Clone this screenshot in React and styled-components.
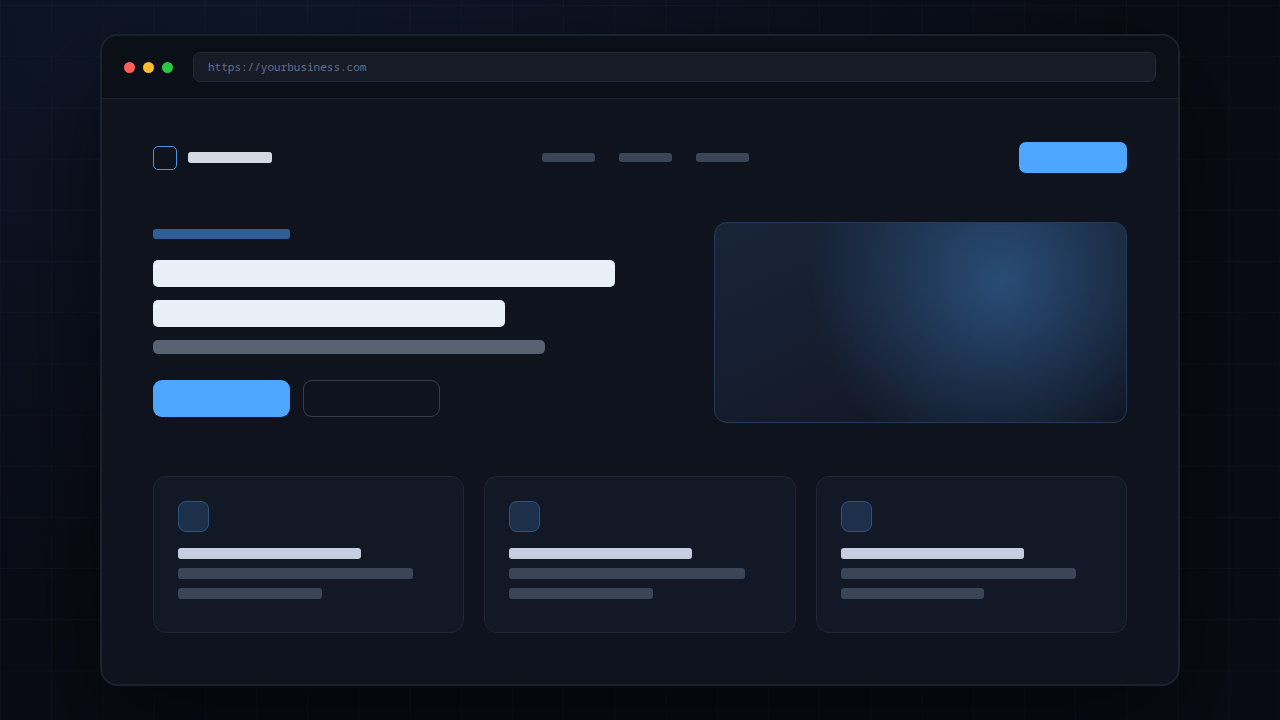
import styled, { createGlobalStyle } from "styled-components";

const features = [
  { id: 1, name: "Feature one" },
  { id: 2, name: "Feature two" },
  { id: 3, name: "Feature three" },
];

const App = () => {
  return (
    <>
      <GlobalStyle />
      <Backdrop>
        <BrowserWindow>
          <Toolbar>
            <Dots>
              <Dot $color="#ff5f57" />
              <Dot $color="#febc2e" />
              <Dot $color="#28c840" />
            </Dots>
            <AddressBar
              type="text"
              aria-label="Address"
              defaultValue="https://yourbusiness.com"
            />
          </Toolbar>
          <Page>
            <Nav>
              <Brand>
                <BrandMark />
                <Bar $width="84px" $height={11} $color="#d5d9e2" />
              </Brand>
              <NavLinks>
                <NavLink href="#features" aria-label="Features" />
                <NavLink href="#pricing" aria-label="Pricing" />
                <NavLink href="#contact" aria-label="Contact" />
              </NavLinks>
              <NavButton type="button" aria-label="Sign up" />
            </Nav>
            <Hero>
              <HeroText>
                <Bar $width="137px" $height={10} $color="#2f5e96" />
                <Headline>
                  <Bar $width="462px" $height={27} $radius={5} $color="#e8eff7" />
                  <Bar $width="352px" $height={27} $radius={5} $color="#e8eff7" />
                  <Bar $width="392px" $height={14} $radius={5} $color="#596273" />
                </Headline>
                <Actions>
                  <ActionButton type="button" aria-label="Start" $primary />
                  <ActionButton type="button" aria-label="Learn more" />
                </Actions>
              </HeroText>
              <HeroVisual />
            </Hero>
            <Features>
              {features.map((el) => {
                return (
                  <FeatureCard key={el.id} aria-label={el.name}>
                    <FeatureIcon />
                    <Bar $width="70%" $height={11} $color="#c5cee0" />
                    <Bar $width="90%" $height={11} $color="#3b4558" />
                    <Bar $width="55%" $height={11} $color="#3b4558" />
                  </FeatureCard>
                );
              })}
            </Features>
          </Page>
        </BrowserWindow>
      </Backdrop>
    </>
  );
};

export default App;

const GlobalStyle = createGlobalStyle`
  * {
    box-sizing: border-box;
  }

  body {
    margin: 0;
    background-color: #070a12;
  }
`;

const Backdrop = styled.main`
  min-height: 100vh;
  padding: 34px 24px;
  display: flex;
  justify-content: center;
  align-items: center;
  background-image:
    linear-gradient(rgba(120, 150, 200, 0.04) 1px, transparent 1px),
    linear-gradient(90deg, rgba(120, 150, 200, 0.04) 1px, transparent 1px),
    radial-gradient(ellipse at 20% 0%, rgba(77, 140, 255, 0.09), transparent 60%),
    linear-gradient(#090c15, #090c15);
  background-size: 4vw 4vw, 4vw 4vw, auto, auto;
  background-position: 0 5px, 0 0, 0 0, 0 0;
`;

const BrowserWindow = styled.section`
  width: 100%;
  max-width: 1080px;
  border: 2px solid #1c222c;
  border-radius: 18px;
  background-color: #0f131d;
  box-shadow: 0 36px 110px rgba(0, 0, 0, 0.55);
  overflow: hidden;
`;

const Toolbar = styled.header`
  display: flex;
  align-items: center;
  gap: 20px;
  padding: 16px 22px;
  background-color: #0b0f17;
  border-bottom: 1px solid #1b2029;
`;

const Dots = styled.div`
  display: flex;
  gap: 8px;
`;

const Dot = styled.span`
  width: 11px;
  height: 11px;
  border-radius: 50%;
  background-color: ${({ $color }) => $color};
`;

const AddressBar = styled.input`
  flex: 1;
  min-width: 0;
  height: 30px;
  padding: 0 14px 2px;
  border: 1px solid #242933;
  border-radius: 7px;
  outline: none;
  background-color: #171b27;
  color: #64708a;
  font-family: "Noto Sans Mono", "Liberation Mono", monospace;
  font-size: 11px;
`;

const Page = styled.div`
  padding: 43px 51px 51px;
`;

const Nav = styled.nav`
  display: flex;
  justify-content: space-between;
  align-items: center;
  margin-bottom: 49px;
`;

const Brand = styled.div`
  display: flex;
  align-items: center;
  gap: 11px;
`;

const BrandMark = styled.span`
  width: 24px;
  height: 24px;
  border: 1px solid #4a94e0;
  border-radius: 5px;
`;

const Bar = styled.div`
  width: ${({ $width }) => $width};
  max-width: 100%;
  height: ${({ $height }) => $height}px;
  border-radius: ${({ $radius = 3 }) => $radius}px;
  background-color: ${({ $color }) => $color};
`;

const NavLinks = styled.div`
  display: flex;
  gap: 24px;
`;

const NavLink = styled.a`
  width: 53px;
  height: 9px;
  border-radius: 3px;
  background-color: #3b4558;
`;

const NavButton = styled.button`
  width: 108px;
  height: 31px;
  padding: 0;
  border: none;
  border-radius: 7px;
  background-color: #4da6ff;
`;

const Hero = styled.section`
  display: grid;
  grid-template-columns: 5fr 4fr;
  align-items: center;
  gap: 44px;
  margin-bottom: 53px;
`;

const HeroText = styled.div`
  display: flex;
  flex-direction: column;
`;

const Headline = styled.div`
  display: flex;
  flex-direction: column;
  gap: 13px;
  margin: 21px 0 26px;
`;

const Actions = styled.div`
  display: flex;
  gap: 13px;
`;

const ActionButton = styled.button`
  width: 137px;
  height: 37px;
  padding: 0;
  border: ${({ $primary }) => ($primary ? "none" : "1px solid #383d47")};
  border-radius: 9px;
  background-color: ${({ $primary }) => ($primary ? "#4da6ff" : "transparent")};
`;

const HeroVisual = styled.div`
  height: 201px;
  border: 1px solid #233c5c;
  border-radius: 13px;
  background-image:
    radial-gradient(circle at 70% 30%, rgba(77, 166, 255, 0.35), transparent 60%),
    linear-gradient(155deg, #182538 0%, #141a2b 60%, #0f131f 100%);
`;

const Features = styled.section`
  display: grid;
  grid-template-columns: repeat(3, 1fr);
  gap: 20px;
`;

const FeatureCard = styled.article`
  display: flex;
  flex-direction: column;
  gap: 9px;
  padding: 24px 24px 33px;
  border: 1px solid #202531;
  border-radius: 13px;
  background-color: #121825;
`;

const FeatureIcon = styled.span`
  width: 31px;
  height: 31px;
  margin-bottom: 7px;
  border: 1px solid #2b5484;
  border-radius: 8px;
  background-color: #1d304b;
`;
